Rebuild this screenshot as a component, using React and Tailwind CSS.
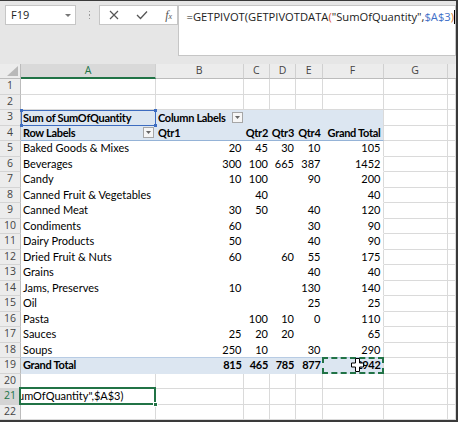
import React from 'react';

// largura de cada coluna (A..G), H ocupa o resto
const COLW = ['w-[135px]', 'w-[87.5px]', 'w-[26.5px]', 'w-[26px]', 'w-[26.5px]', 'w-[61px]', 'w-[64px]'];
const LETTERS = ['A', 'B', 'C', 'D', 'E', 'F', 'G'];

const DATA = [
  ['Baked Goods & Mixes', '20', '45', '30', '10', '105'],
  ['Beverages', '300', '100', '665', '387', '1452'],
  ['Candy', '10', '100', '', '90', '200'],
  ['Canned Fruit & Vegetables', '', '40', '', '', '40'],
  ['Canned Meat', '30', '50', '', '40', '120'],
  ['Condiments', '60', '', '', '30', '90'],
  ['Dairy Products', '50', '', '', '40', '90'],
  ['Dried Fruit & Nuts', '60', '', '60', '55', '175'],
  ['Grains', '', '', '', '40', '40'],
  ['Jams, Preserves', '10', '', '', '130', '140'],
  ['Oil', '', '', '', '25', '25'],
  ['Pasta', '', '100', '10', '0', '110'],
  ['Sauces', '25', '20', '20', '', '65'],
  ['Soups', '250', '10', '', '30', '290'],
];

const cell = "box-border shrink-0 border-r border-b border-[#dadada] h-full";

const RowHead = ({ n, active }) => (
  <div
    className={`w-[21px] shrink-0 h-full box-border border-r border-b border-r-[#bcbcbc] border-b-[#d4d4d4] flex items-center justify-center text-[10.5px] font-['Open_Sans',sans-serif] ${
      active ? 'bg-[#d4d4d4] text-[#217346]' : 'bg-[#ececec] text-[#444]'
    }`}
  >
    {n}
  </div>
);

// células vazias a partir de uma coluna
const Blank = ({ from = 0 }) => (
  <>
    {COLW.slice(from).map((w, i) => (
      <div key={i} className={`${cell} ${w}`} />
    ))}
    <div className={`${cell} flex-1`} />
  </>
);

const DropBtn = () => (
  <div className="w-[11px] h-[11px] box-border border border-[#a6a6a6] bg-[#f6f6f6] flex items-center justify-center shrink-0">
    <svg width="5" height="3" viewBox="0 0 5 3">
      <path d="M0 0h5L2.5 3z" fill="#666" />
    </svg>
  </div>
);

const Cursor = () => (
  <svg className="absolute left-[28px] top-[0px]" width="13" height="14" viewBox="0 0 13 14">
    <path
      d="M4.5 0.5h4v4.5h4v4h-4v4.5h-4v-4.5h-4v-4h4z"
      fill="#fff"
      stroke="#000"
      strokeWidth="1"
    />
  </svg>
);

export default function App() {
  return (
    <div className="w-[458px] h-[422px] bg-white box-border border-t border-r-2 border-b-2 border-[#3a3a3a] overflow-hidden font-['Lato',sans-serif] text-[11px] text-black">
      {/* barra de fórmulas */}
      <div className="h-[63px] bg-[#e6e6e6] flex items-start pt-[4px] pl-[5px] font-['Open_Sans',sans-serif]">
        <div className="w-[77px] h-[20px] box-border border border-[#c6c6c6] bg-white flex items-center justify-between pl-[5px] pr-[4px] text-[11px] text-[#222]">
          <span>F19</span>
          <svg width="6" height="3" viewBox="0 0 6 3">
            <path d="M0 0h6L3 3z" fill="#777" />
          </svg>
        </div>
        <div className="w-[25px] h-[20px] flex flex-col items-center justify-center gap-[2px] pl-[4px]">
          <span className="w-[1.5px] h-[1.5px] bg-[#9a9a9a]" />
          <span className="w-[1.5px] h-[1.5px] bg-[#9a9a9a]" />
          <span className="w-[1.5px] h-[1.5px] bg-[#9a9a9a]" />
        </div>
        <div className="w-[87px] h-[20px] box-border border border-[#c6c6c6] bg-white flex items-center text-[#555]">
          <svg className="ml-[9px]" width="10" height="10" viewBox="0 0 10 10">
            <path d="M1 1l8 8M9 1l-8 8" stroke="#555" strokeWidth="1.2" />
          </svg>
          <svg className="ml-[17px]" width="12" height="10" viewBox="0 0 12 10">
            <path d="M1 5l3.5 3.5L11 1.5" stroke="#555" strokeWidth="1.3" fill="none" />
          </svg>
          <span className="ml-[17px] italic font-['Liberation_Serif',serif] text-[12px] leading-none">
            f<span className="text-[8px]">x</span>
          </span>
        </div>
        <div className="flex-1 h-[51px] box-border border border-[#c6c6c6] bg-white pl-[7px] pt-[3px] text-[11.2px] leading-[16px] text-[#222] flex items-start whitespace-nowrap">
          <span>=GETPIVOT(GETPIVOTDATA</span>
          <span className="text-[#e2502b]">(</span>
          <span>"SumOfQuantity",</span>
          <span className="text-[#3f70c8]">$A$3</span>
          <span className="text-[#d9792a]">)</span>
          <span className="w-px h-[14px] bg-black mt-[1px]" />
        </div>
      </div>

      {/* cabeçalho de colunas */}
      <div className="flex h-[15px] font-['Open_Sans',sans-serif] text-[10.5px]">
        <div className="w-[21px] shrink-0 h-full box-border border-r border-b border-[#bcbcbc] bg-[#ececec] relative">
          <svg className="absolute right-[2px] bottom-[2px]" width="11" height="10" viewBox="0 0 11 10">
            <path d="M11 0v10H0z" fill="#b8b8b8" />
          </svg>
        </div>
        {COLW.map((w, i) => (
          <div
            key={i}
            className={`${w} shrink-0 h-full box-border border-r border-r-[#d0d0d0] flex items-center justify-center ${
              i === 0
                ? 'bg-[#d9d9d9] text-[#217346] border-b-2 border-b-[#217346]'
                : 'bg-[#ececec] text-[#444] border-b border-b-[#bcbcbc]'
            }`}
          >
            {LETTERS[i]}
          </div>
        ))}
        <div className="flex-1 h-full box-border border-b border-[#bcbcbc] bg-[#ececec]" />
      </div>

      {/* linhas 1 e 2 */}
      {[1, 2].map((n) => (
        <div key={n} className="flex h-[15.5px]">
          <RowHead n={n} />
          <Blank />
        </div>
      ))}

      {/* linha 3 */}
      <div className="flex h-[15.5px]">
        <RowHead n={3} />
        <div className="w-[362.5px] shrink-0 h-full box-border border-r border-r-[#dadada] bg-[#dce6f1] flex font-bold tracking-[-0.3px] whitespace-nowrap">
          <div className="w-[135px] shrink-0 h-full relative flex items-center pl-[2px]">
            Sum of SumOfQuantity
            <div className="absolute left-0 top-[-0.5px] right-0 bottom-0 border border-[#3d6cc0]" />
            <span className="absolute left-[-1px] top-[-1.5px] w-[3px] h-[3px] bg-[#3d6cc0]" />
            <span className="absolute right-[-1px] top-[-1.5px] w-[3px] h-[3px] bg-[#3d6cc0]" />
            <span className="absolute left-[-1px] bottom-[-1.5px] w-[3px] h-[3px] bg-[#3d6cc0]" />
            <span className="absolute right-[-1px] bottom-[-1.5px] w-[3px] h-[3px] bg-[#3d6cc0]" />
          </div>
          <div className="w-[87.5px] shrink-0 h-full flex items-center justify-between pl-[2px] pr-[1px]">
            <span>Column Labels</span>
            <DropBtn />
          </div>
        </div>
        <Blank from={6} />
      </div>

      {/* linha 4 */}
      <div className="flex h-[15.5px]">
        <RowHead n={4} />
        <div className="w-[362.5px] shrink-0 h-full box-border border-r border-b border-r-[#dadada] border-b-[#95b3d7] bg-[#dce6f1] flex font-bold tracking-[-0.3px] whitespace-nowrap">
          <div className="w-[135px] shrink-0 h-full flex items-center justify-between pl-[2px] pr-[2px]">
            <span>Row Labels</span>
            <DropBtn />
          </div>
          <div className="w-[87.5px] shrink-0 h-full flex items-center pl-[2px]">Qtr1</div>
          <div className="w-[26.5px] shrink-0 h-full flex items-center justify-end pr-[2px]">Qtr2</div>
          <div className="w-[26px] shrink-0 h-full flex items-center justify-end pr-[2px]">Qtr3</div>
          <div className="w-[26.5px] shrink-0 h-full flex items-center justify-end pr-[2px]">Qtr4</div>
          <div className="w-[60px] shrink-0 h-full flex items-center justify-end pr-[2px]">Grand Total</div>
        </div>
        <Blank from={6} />
      </div>

      {/* dados da tabela dinâmica */}
      {DATA.map((r, idx) => (
        <div key={idx} className="flex h-[15.5px]">
          <RowHead n={idx + 5} />
          <div
            className={`w-[362.5px] shrink-0 h-full box-border border-r border-b border-r-[#dadada] bg-white flex whitespace-nowrap ${
              idx === DATA.length - 1 ? 'border-b-[#b8cce4]' : 'border-b-white'
            }`}
          >
            <div className="w-[135px] shrink-0 h-full flex items-center pl-[2px]">{r[0]}</div>
            <div className="w-[87.5px] shrink-0 h-full flex items-center justify-end pr-[2px]">{r[1]}</div>
            <div className="w-[26.5px] shrink-0 h-full flex items-center justify-end pr-[2px]">{r[2]}</div>
            <div className="w-[26px] shrink-0 h-full flex items-center justify-end pr-[2px]">{r[3]}</div>
            <div className="w-[26.5px] shrink-0 h-full flex items-center justify-end pr-[2px]">{r[4]}</div>
            <div className="w-[60px] shrink-0 h-full flex items-center justify-end pr-[2px]">{r[5]}</div>
          </div>
          <Blank from={6} />
        </div>
      ))}

      {/* linha 19: total geral */}
      <div className="flex h-[15.5px]">
        <RowHead n={19} />
        <div className="w-[362.5px] shrink-0 h-full box-border border-r border-b border-r-[#dadada] border-b-[#dce6f1] bg-[#dce6f1] flex font-bold tracking-[-0.3px] whitespace-nowrap">
          <div className="w-[135px] shrink-0 h-full flex items-center pl-[2px]">Grand Total</div>
          <div className="w-[87.5px] shrink-0 h-full flex items-center justify-end pr-[2px]">815</div>
          <div className="w-[26.5px] shrink-0 h-full flex items-center justify-end pr-[2px]">465</div>
          <div className="w-[26px] shrink-0 h-full flex items-center justify-end pr-[2px]">785</div>
          <div className="w-[26.5px] shrink-0 h-full flex items-center justify-end pr-[2px]">877</div>
          <div className="w-[60px] shrink-0 h-full flex items-center justify-end pr-[2px] relative">
            2942
            <div className="absolute left-[-1px] top-[-1.5px] right-[-1px] bottom-[-1px] border-2 border-dashed border-[#217346]" />
            <Cursor />
          </div>
        </div>
        <Blank from={6} />
      </div>

      {/* linha 20 */}
      <div className="flex h-[15.5px]">
        <RowHead n={20} />
        <Blank />
      </div>

      {/* linha 21: célula em edição */}
      <div className="flex h-[15.5px]">
        <RowHead n={21} active />
        <div className={`${cell} w-[135px] relative`}>
          <div className="h-full overflow-hidden flex items-center whitespace-nowrap">
            <span className="ml-[-3px]">umOfQuantity",$A$3)</span>
          </div>
          <div className="absolute left-[-2px] top-[-2px] right-[-1px] bottom-[-1px] border-2 border-[#217346]" />
          <span className="absolute right-[-3px] bottom-[-3px] w-[5px] h-[5px] bg-[#217346] border border-white" />
        </div>
        <Blank from={1} />
      </div>

      {/* linha 22 */}
      <div className="flex h-[15.5px]">
        <RowHead n={22} />
        <Blank />
      </div>
    </div>
  );
}
